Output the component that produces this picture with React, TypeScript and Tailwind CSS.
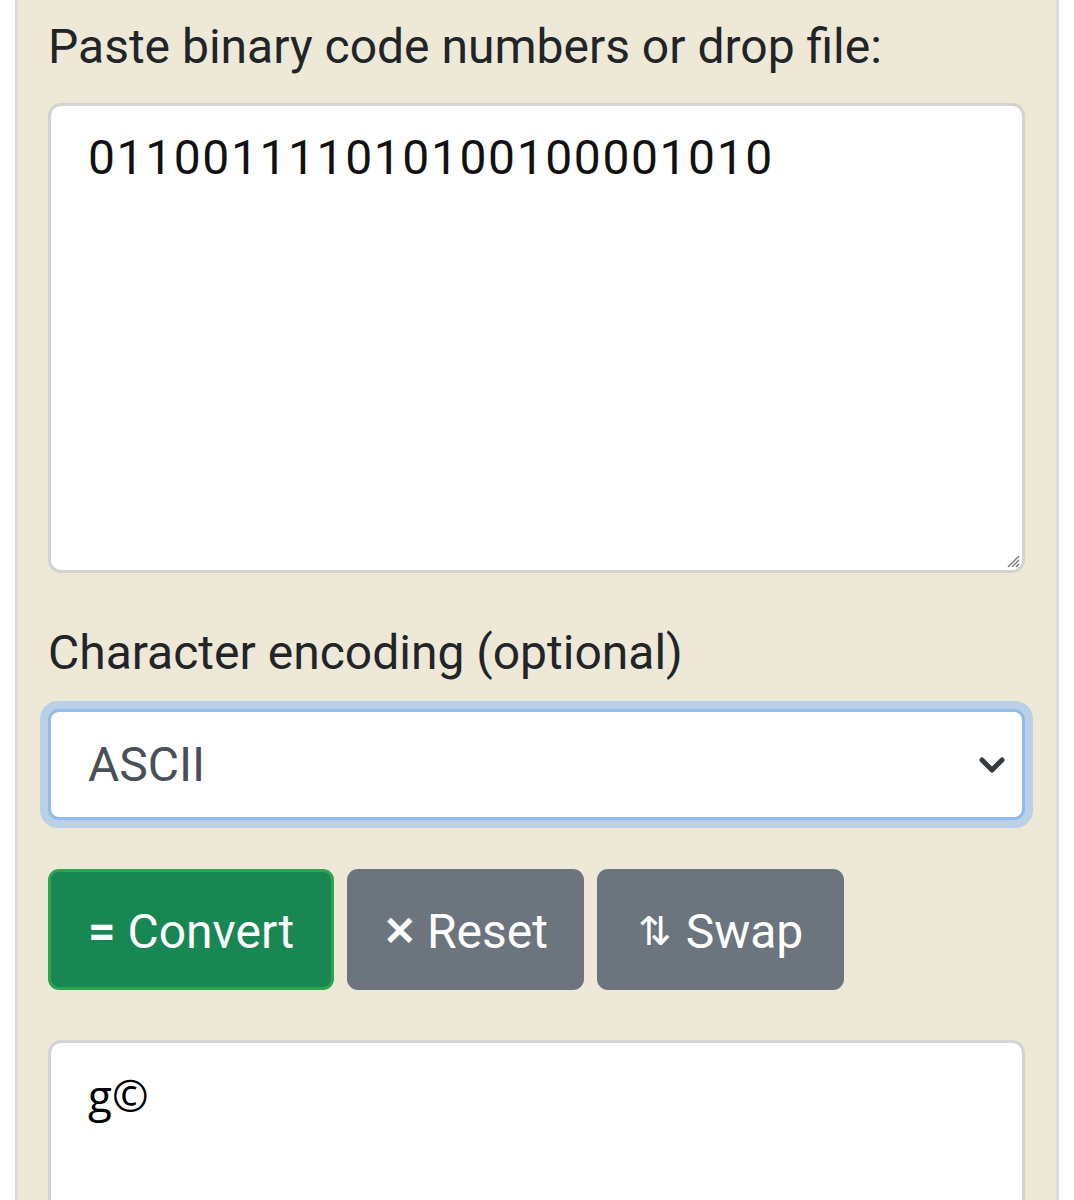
import { ChevronDown } from 'lucide-react'

const label = "block text-[48px] leading-[56px] text-[#212529] font-['Roboto',sans-serif]"
const btn =
  "flex h-[121px] items-center justify-center whitespace-nowrap rounded-[11px] pt-[4px] text-[48px] text-white font-['Roboto',sans-serif]"

export default function App() {
  return (
    <div className="min-h-screen bg-white">
      <div className="ml-[15px] h-[1200px] w-[1044px] overflow-hidden border-x-[3px] border-[#dcdcdc] bg-[#eee8d6] pl-[30px] pr-[31px]">
        <label className={`${label} mt-[19px]`}>Paste binary code numbers or drop file:</label>

        <div className="relative mt-[28px] h-[470px] rounded-[13px] border-[3px] border-[#d3d3d3] bg-white px-[37px] pt-[16px]">
          <div className="font-['Roboto',sans-serif] text-[48px] leading-[72px] tracking-[1.6px] text-[#111]">
            011001111010100100001010
          </div>
          <svg className="absolute bottom-[2px] right-[2px]" width="16" height="16" viewBox="0 0 16 16">
            <path d="M15 4 L4 15 M15 8 L8 15 M15 12 L12 15" stroke="#777" strokeWidth="1.4" />
          </svg>
        </div>

        <label className={`${label} mt-[52px]`}>Character encoding (optional)</label>

        <div className="mt-[20px] -mx-[8px] rounded-[18px] bg-[#b9d0e6] p-[8px]">
          <div className="flex h-[111px] items-center justify-between rounded-[11px] border-[3px] border-[#8fbcec] bg-white pl-[37px] pr-[10px]">
            <span className="font-['Roboto',sans-serif] text-[48px] text-[#495057]">ASCII</span>
            <ChevronDown className="h-[40px] w-[40px] text-[#343a40]" strokeWidth={3} />
          </div>
        </div>

        <div className="mt-[41px] flex gap-[13px]">
          <button className={`${btn} w-[286px] border-[3px] border-[#2ea44f] bg-[#198754]`}>
            <span className="mr-[12px] font-bold">=</span>Convert
          </button>
          <button className={`${btn} w-[237px] bg-[#6c757d]`}>
            <span className="mr-[10px] text-[40px] font-bold">✕</span>Reset
          </button>
          <button className={`${btn} w-[247px] bg-[#6c757d]`}>
            <span className="mr-[14px] text-[40px]">⇅</span>Swap
          </button>
        </div>

        <div className="mt-[50px] h-[300px] rounded-[13px] border-[3px] border-[#d3d3d3] bg-white px-[37px] pt-[20px]">
          <div className="font-['Open_Sans',sans-serif] text-[44px] leading-[64px] text-black">g©</div>
        </div>
      </div>
    </div>
  )
}
